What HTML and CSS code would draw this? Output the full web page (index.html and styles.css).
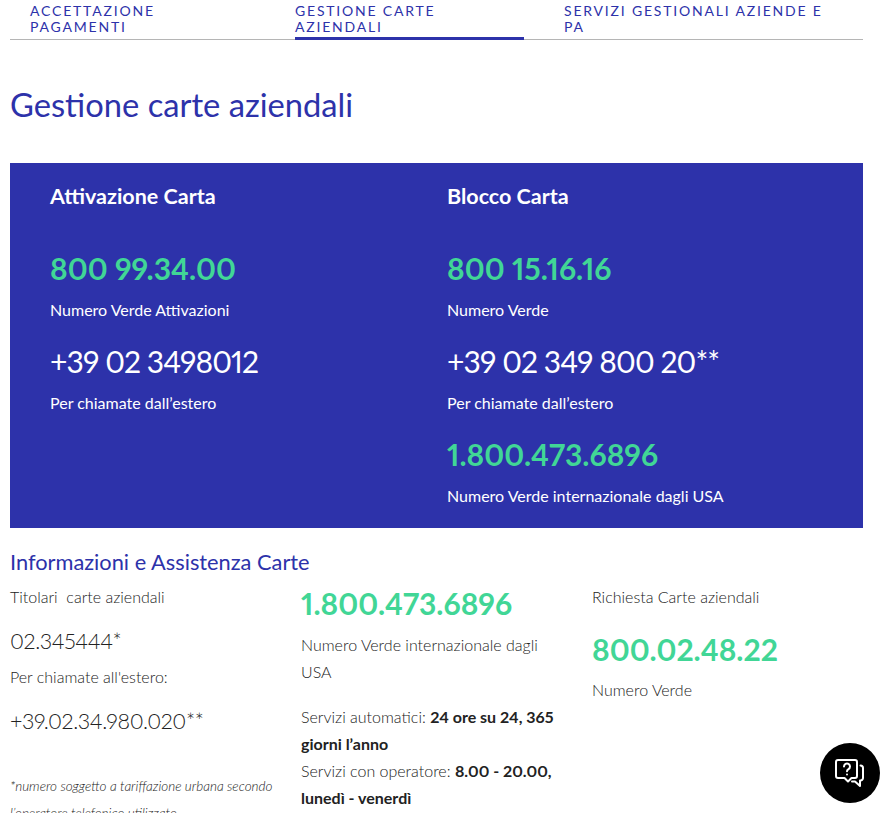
FILE: index.html
```html
<!DOCTYPE html>
<html>
<head>
    <meta charset="UTF-8">
    <title>Gestione carte aziendali</title>
    <link rel="stylesheet" href="styles.css">
</head>
<body>
    <div class="page">
        <nav class="tabs">
            <a class="tab tab-first" href="#">ACCETTAZIONE PAGAMENTI</a>
            <a class="tab tab-active" href="#">GESTIONE CARTE AZIENDALI</a>
            <a class="tab tab-last" href="#">SERVIZI GESTIONALI AZIENDE E PA</a>
        </nav>
        <h1 class="title">Gestione carte aziendali</h1>
        <section class="panel">
            <div class="panel-col">
                <h2 class="panel-title">Attivazione Carta</h2>
                <p class="num num-green">800 99.34.00</p>
                <p class="num-label">Numero Verde Attivazioni</p>
                <p class="num">+39 02 3498012</p>
                <p class="num-label">Per chiamate dall’estero</p>
            </div>
            <div class="panel-col">
                <h2 class="panel-title">Blocco Carta</h2>
                <p class="num num-green">800 15.16.16</p>
                <p class="num-label">Numero Verde</p>
                <p class="num">+39 02 349 800 20**</p>
                <p class="num-label">Per chiamate dall’estero</p>
                <p class="num num-green">1.800.473.6896</p>
                <p class="num-label">Numero Verde internazionale dagli USA</p>
            </div>
        </section>
        <h3 class="info-title">Informazioni e Assistenza Carte</h3>
        <section class="info">
            <div class="info-col">
                <p class="info-text">Titolari &nbsp;carte aziendali</p>
                <p class="info-num">02.345444*</p>
                <p class="info-text">Per chiamate all'estero:</p>
                <p class="info-num">+39.02.34.980.020**</p>
                <p class="info-note">*numero soggetto a tariffazione urbana secondo l’operatore telefonico utilizzato</p>
            </div>
            <div class="info-col">
                <p class="info-green">1.800.473.6896</p>
                <p class="info-text">Numero Verde internazionale dagli USA</p>
                <p class="info-text info-hours">Servizi automatici: <b>24 ore su 24, 365 giorni l’anno</b><br>Servizi con operatore: <b>8.00 - 20.00, lunedì - venerdì</b></p>
            </div>
            <div class="info-col">
                <p class="info-text">Richiesta Carte aziendali</p>
                <p class="info-green info-green-mid">800.02.48.22</p>
                <p class="info-text">Numero Verde</p>
            </div>
        </section>
    </div>
    <button class="help" aria-label="Assistenza">
        <svg width="32" height="32" viewBox="0 0 32 32" fill="none" stroke="#fff" stroke-width="2" stroke-linejoin="round" stroke-linecap="round">
            <path d="M4 3h17a2 2 0 0 1 2 2v14a2 2 0 0 1-2 2h-3.500l-3.500 3.500-3.500-3.500H4a2 2 0 0 1-2-2V5a2 2 0 0 1 2-2z"/>
            <path d="M26.500 8.500a2.500 2.500 0 0 1 2.500 2.500v10a2.500 2.500 0 0 1-2.500 2.500h-.5v5.500l-5-4.500h-3"/>
            <path d="M10 9.500a3 3 0 1 1 4.500 2.600c-1 .6-1.500 1.100-1.500 2.200"/>
            <path d="M13 17.500v.1"/>
        </svg>
    </button>
</body>
</html>
```

FILE: styles.css
```css
body {
    margin: 0;
    height: 813px;
    overflow: hidden;
    font-family: Lato, "Open Sans", sans-serif;
    font-variant-numeric: proportional-nums;
    color: #222222;
    background-color: #ffffff;
}
p, h1, h2, h3 {
    margin: 0;
    font-weight: normal;
}
.page {
    width: 853px;
    margin-left: 10px;
}
.tabs {
    display: flex;
    height: 39px;
    border-bottom: 1px solid #b5b5b5;
}
.tab {
    display: block;
    flex: none;
    box-sizing: border-box;
    height: 40px;
    padding-top: 3px;
    font-size: 14px;
    line-height: 16px;
    letter-spacing: 1.8px;
    color: #2d32aa;
    text-decoration: none;
}
.tab-first {
    width: 285px;
    padding-left: 20px;
    padding-right: 60px;
}
.tab-active {
    width: 229px;
    margin-right: 40px;
    padding-right: 60px;
    border-bottom: 3px solid #2d32aa;
}
.tab-last {
    width: 299px;
    padding-right: 30px;
}
.title {
    margin-top: 47px;
    font-size: 32.7px;
    line-height: 36px;
    color: #2d32aa;
}
.panel {
    display: flex;
    margin-top: 40px;
    height: 365px;
    box-sizing: border-box;
    padding: 21px 40px 0;
    background-color: #2d32aa;
    color: #ffffff;
}
.panel-col {
    flex: none;
    width: 397px;
}
.panel-title {
    font-size: 21.5px;
    line-height: 24px;
    font-weight: 700;
    margin-bottom: 42px;
}
.num {
    font-size: 30px;
    line-height: 36px;
    letter-spacing: -0.9px;
    margin-bottom: 15px;
}
.num-green {
    color: #41d696;
    font-weight: 700;
    letter-spacing: 0;
}
.num-label {
    font-size: 16px;
    line-height: 18px;
    margin-bottom: 24px;
}
.info-title {
    margin-top: 22px;
    font-size: 21.8px;
    line-height: 24px;
    color: #2d32aa;
}
.info {
    display: flex;
    margin-top: 9px;
}
.info-col {
    flex: none;
    width: 291px;
    padding-right: 30px;
    box-sizing: border-box;
}
.info-col:first-child {
    padding-right: 15px;
}
.info-text {
    font-size: 16px;
    line-height: 27px;
    font-weight: 300;
}
.info-text b {
    font-weight: 700;
}
.info-num {
    font-size: 21.5px;
    line-height: 27px;
    letter-spacing: -0.4px;
    margin-top: 18px;
    margin-bottom: 8px;
    font-weight: 300;
}
.info-note {
    font-size: 13.5px;
    line-height: 27px;
    font-style: italic;
    font-weight: 300;
    margin-top: 38px;
}
.info-green {
    font-size: 30px;
    line-height: 36px;
    color: #41d696;
    font-weight: 700;
    margin-bottom: 10px;
    margin-top: 2px;
}
.info-green-mid {
    margin-top: 21px;
    margin-bottom: 9px;
}
.info-hours {
    margin-top: 18px;
}
.help {
    position: fixed;
    right: 8px;
    bottom: 11px;
    width: 60px;
    height: 60px;
    padding: 0;
    border: none;
    border-radius: 50%;
    background-color: #000000;
    display: flex;
    align-items: center;
    justify-content: center;
}
```
